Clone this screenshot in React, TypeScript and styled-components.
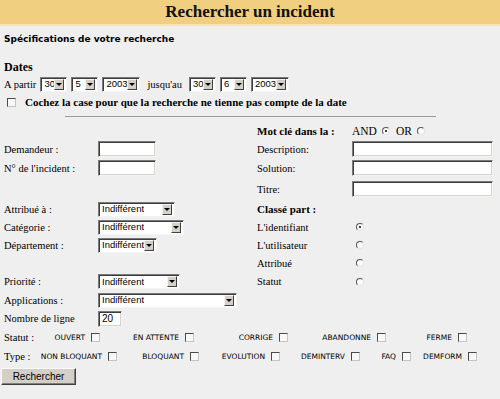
import React from "react";
import styled, { createGlobalStyle } from "styled-components";

const Global = createGlobalStyle`
  html, body { margin: 0; padding: 0; background: #efefef; }
  body { font-family: "Liberation Serif", "Times New Roman", serif; color: #000; }
`;

const SANS = `"Liberation Sans", Arial, sans-serif`;

const Page = styled.div`
  width: 500px;
  height: 399px;
  overflow: hidden;
  background: #efefef;
`;

const Header = styled.div`
  height: 24px;
  background: #f0cf80;
  border-bottom: 2px solid #f7e4ae;
  display: flex;
  align-items: center;
  justify-content: center;
  font: bold 17px "Liberation Serif", serif;
  color: #111;
`;

const Body = styled.div`
  padding: 0 4px;
`;

const Subtitle = styled.div`
  margin-top: 6px;
  font: bold 9px "DejaVu Sans", Verdana, sans-serif;
  line-height: 14px;
`;

const SectionTitle = styled.div`
  margin-top: 14px;
  font: bold 12px "Liberation Serif", serif;
  line-height: 14px;
`;

const DateRow = styled.div`
  margin-top: 1px;
  height: 18px;
  display: flex;
  align-items: center;
  gap: 4px;
  font: 10.5px "Liberation Serif", serif;
`;

const Until = styled.span`
  margin: 0 3px;
`;

const CheckRow = styled.div`
  height: 18px;
  display: flex;
  align-items: center;
  gap: 9px;
  padding-left: 3px;
  font: bold 11px "Liberation Serif", serif;
`;

const Rule = styled.div`
  width: 371px;
  margin: 5px auto 0;
  border-top: 1px solid #9a9a9a;
`;

const FormGrid = styled.div`
  margin-top: 5px;
  display: grid;
  grid-template-columns: 94px 159px 95px 1fr;
  grid-template-rows: 18px 18px 20px 22px 18px 18px 18px 18px 19px 18px 19px;
  align-items: center;
`;

const Label = styled.span`
  font: 10.5px "Liberation Serif", serif;
  white-space: nowrap;
`;

const BoldLabel = styled.span`
  font: bold 11px "Liberation Serif", serif;
  white-space: nowrap;
`;

const Empty = styled.span``;

const TextInput = styled.div<{ $w: number }>`
  width: ${(p) => p.$w}px;
  height: 16px;
  box-sizing: border-box;
  background: #fff;
  border: 1px solid;
  border-color: #7a7a7a #f4f4f4 #f4f4f4 #7a7a7a;
  box-shadow: inset 1px 1px #3c3c3c, inset -1px -1px #d6d3cc;
  padding: 0 3px;
  display: flex;
  align-items: center;
  font: 10px ${SANS};
`;

const SelectBox = styled.div<{ $w: number }>`
  width: ${(p) => p.$w}px;
  height: 15px;
  box-sizing: border-box;
  background: #fff;
  border: 1px solid;
  border-color: #7a7a7a #f4f4f4 #f4f4f4 #7a7a7a;
  box-shadow: inset 1px 1px #3c3c3c;
  padding: 1px 1px 1px 3px;
  display: flex;
  align-items: center;
  justify-content: space-between;
  font: 9.5px ${SANS};
  line-height: 1;
`;

const SelectText = styled.span`
  white-space: nowrap;
  overflow: hidden;
`;

const ArrowButton = styled.span`
  flex: none;
  width: 10px;
  height: 11px;
  margin-right: 1px;
  box-sizing: border-box;
  background: #d4d0c8;
  border: 1px solid;
  border-color: #f4f4f4 #404040 #404040 #f4f4f4;
  display: flex;
  align-items: center;
  justify-content: center;
  &::after {
    content: "";
    border-left: 3px solid transparent;
    border-right: 3px solid transparent;
    border-top: 3px solid #000;
  }
`;

const Radio = styled.span<{ $checked?: boolean }>`
  display: inline-flex;
  align-items: center;
  justify-content: center;
  width: 8px;
  height: 8px;
  box-sizing: border-box;
  border-radius: 50%;
  border: 1px solid;
  border-color: #555 #e4e4e4 #e4e4e4 #555;
  background: #fbfbfb;
  &::after {
    content: "";
    width: 2px;
    height: 2px;
    border-radius: 50%;
    background: ${(p) => (p.$checked ? "#000" : "transparent")};
  }
`;

const Check = styled.span`
  display: inline-block;
  flex: none;
  width: 9px;
  height: 9px;
  box-sizing: border-box;
  border: 1px solid;
  border-color: #4a4a4a #c4c4c4 #c4c4c4 #4a4a4a;
  background: #f8f8f8;
`;

const KeywordChoice = styled.div`
  display: flex;
  align-items: center;
  gap: 5px;
  font: 11.5px "Liberation Serif", serif;
`;

const OrText = styled.span`
  margin-left: 1px;
`;

const RadioCell = styled.div`
  padding-left: 4px;
  display: flex;
  align-items: center;
`;

const FlagRow = styled.div<{ $cols: string }>`
  height: 19px;
  display: grid;
  grid-template-columns: ${(p) => p.$cols};
  align-items: center;
`;

const Flag = styled.span`
  display: flex;
  justify-content: flex-end;
  align-items: center;
  gap: 6px;
  font: 7.5px "DejaVu Sans", Verdana, sans-serif;
  white-space: nowrap;
`;

const SubmitButton = styled.button`
  margin-left: -3px;
  width: 75px;
  height: 17px;
  padding: 0;
  background: #d4d0c8;
  border: 1px solid;
  border-color: #fafafa #404040 #404040 #fafafa;
  box-shadow: inset -1px -1px #808080;
  font: 10px ${SANS};
  color: #000;
`;

const Select = ({ w, value }: { w: number; value: string }) => (
  <SelectBox $w={w}>
    <SelectText>{value}</SelectText>
    <ArrowButton />
  </SelectBox>
);

const statuts = ["OUVERT", "EN ATTENTE", "CORRIGE", "ABANDONNE", "FERME"];
const types = ["NON BLOQUANT", "BLOQUANT", "EVOLUTION", "DEMINTERV", "FAQ", "DEMFORM"];

export default function App() {
  return (
    <Page>
      <Global />
      <Header>Rechercher un incident</Header>
      <Body>
        <Subtitle>Spécifications de votre recherche</Subtitle>
        <SectionTitle>Dates</SectionTitle>
        <DateRow>
          <span>A partir</span>
          <Select w={27} value="30" />
          <Select w={27} value="5" />
          <Select w={38} value="2003" />
          <Until>jusqu'au</Until>
          <Select w={27} value="30" />
          <Select w={27} value="6" />
          <Select w={38} value="2003" />
        </DateRow>
        <CheckRow>
          <Check />
          <span>Cochez la case pour que la recherche ne tienne pas compte de la date</span>
        </CheckRow>
        <Rule />
        <FormGrid>
          <Empty />
          <Empty />
          <BoldLabel>Mot clé dans la :</BoldLabel>
          <KeywordChoice>
            <span>AND</span>
            <Radio $checked />
            <OrText>OR</OrText>
            <Radio />
          </KeywordChoice>

          <Label>Demandeur :</Label>
          <TextInput $w={58} />
          <Label>Description:</Label>
          <TextInput $w={141} />

          <Label>N° de l'incident :</Label>
          <TextInput $w={58} />
          <Label>Solution:</Label>
          <TextInput $w={141} />

          <Empty />
          <Empty />
          <Label>Titre:</Label>
          <TextInput $w={141} />

          <Label>Attribué à :</Label>
          <Select w={77} value="Indifférent" />
          <BoldLabel>Classé part :</BoldLabel>
          <Empty />

          <Label>Catégorie :</Label>
          <Select w={86} value="Indifférent" />
          <Label>L'identifiant</Label>
          <RadioCell>
            <Radio $checked />
          </RadioCell>

          <Label>Département :</Label>
          <Select w={59} value="Indifférent" />
          <Label>L'utilisateur</Label>
          <RadioCell>
            <Radio />
          </RadioCell>

          <Empty />
          <Empty />
          <Label>Attribué</Label>
          <RadioCell>
            <Radio />
          </RadioCell>

          <Label>Priorité :</Label>
          <Select w={82} value="Indifférent" />
          <Label>Statut</Label>
          <RadioCell>
            <Radio />
          </RadioCell>

          <Label>Applications :</Label>
          <Select w={139} value="Indifférent" />
          <Empty />
          <Empty />

          <Label>Nombre de ligne</Label>
          <TextInput $w={24}>20</TextInput>
          <Empty />
          <Empty />
        </FormGrid>
        <FlagRow $cols="47px 49px 94px 94px 98px 81px">
          <Label>Statut :</Label>
          {statuts.map((s) => (
            <Flag key={s}>
              {s}
              <Check />
            </Flag>
          ))}
        </FlagRow>
        <FlagRow $cols="34px 79px 82px 81px 80px 51px 66px">
          <Label>Type :</Label>
          {types.map((t) => (
            <Flag key={t}>
              {t}
              <Check />
            </Flag>
          ))}
        </FlagRow>
        <SubmitButton>Rechercher</SubmitButton>
      </Body>
    </Page>
  );
}
